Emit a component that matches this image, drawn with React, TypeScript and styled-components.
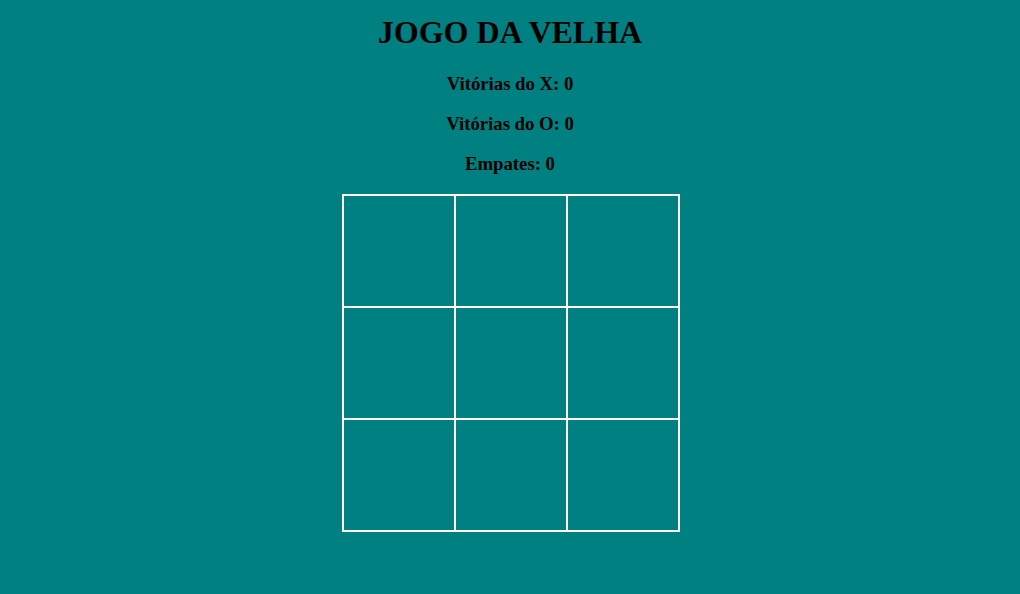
import React from "react";
import styled, { createGlobalStyle } from "styled-components";

const Global = createGlobalStyle`
  html, body {
    margin: 0;
    padding: 0;
    background: #008080;
  }
  body {
    font-family: "Liberation Serif", "Times New Roman", serif;
    color: #000;
  }
`;

const Page = styled.div`
  display: flex;
  flex-direction: column;
  align-items: center;
  padding-top: 14px;
`;

const Title = styled.h1`
  font-size: 32px;
  font-weight: bold;
  line-height: 36px;
  margin: 0 0 23px;
`;

const Stat = styled.h3`
  font-size: 18.72px;
  font-weight: bold;
  line-height: 21px;
  margin: 0 0 19px;
`;

const Board = styled.div`
  display: grid;
  grid-template-columns: repeat(3, 110px);
  grid-template-rows: repeat(3, 110px);
  gap: 2px;
  padding: 2px;
  background: #fff;
  margin-top: 1px;
  margin-left: 1px;
`;

const Cell = styled.button`
  background: #008080;
  border: none;
  padding: 0;
  margin: 0;
  cursor: pointer;
  font-family: inherit;
  font-size: 64px;
  font-weight: bold;
  color: #000;
`;

export default function App() {
  const cells = Array.from({ length: 9 }, (_, i) => i);
  return (
    <>
      <Global />
      <Page>
        <Title>JOGO DA VELHA</Title>
        <Stat>Vitórias do X: 0</Stat>
        <Stat>Vitórias do O: 0</Stat>
        <Stat>Empates: 0</Stat>
        <Board>
          {cells.map((i) => (
            <Cell key={i} aria-label={`casa ${i + 1}`} />
          ))}
        </Board>
      </Page>
    </>
  );
}
